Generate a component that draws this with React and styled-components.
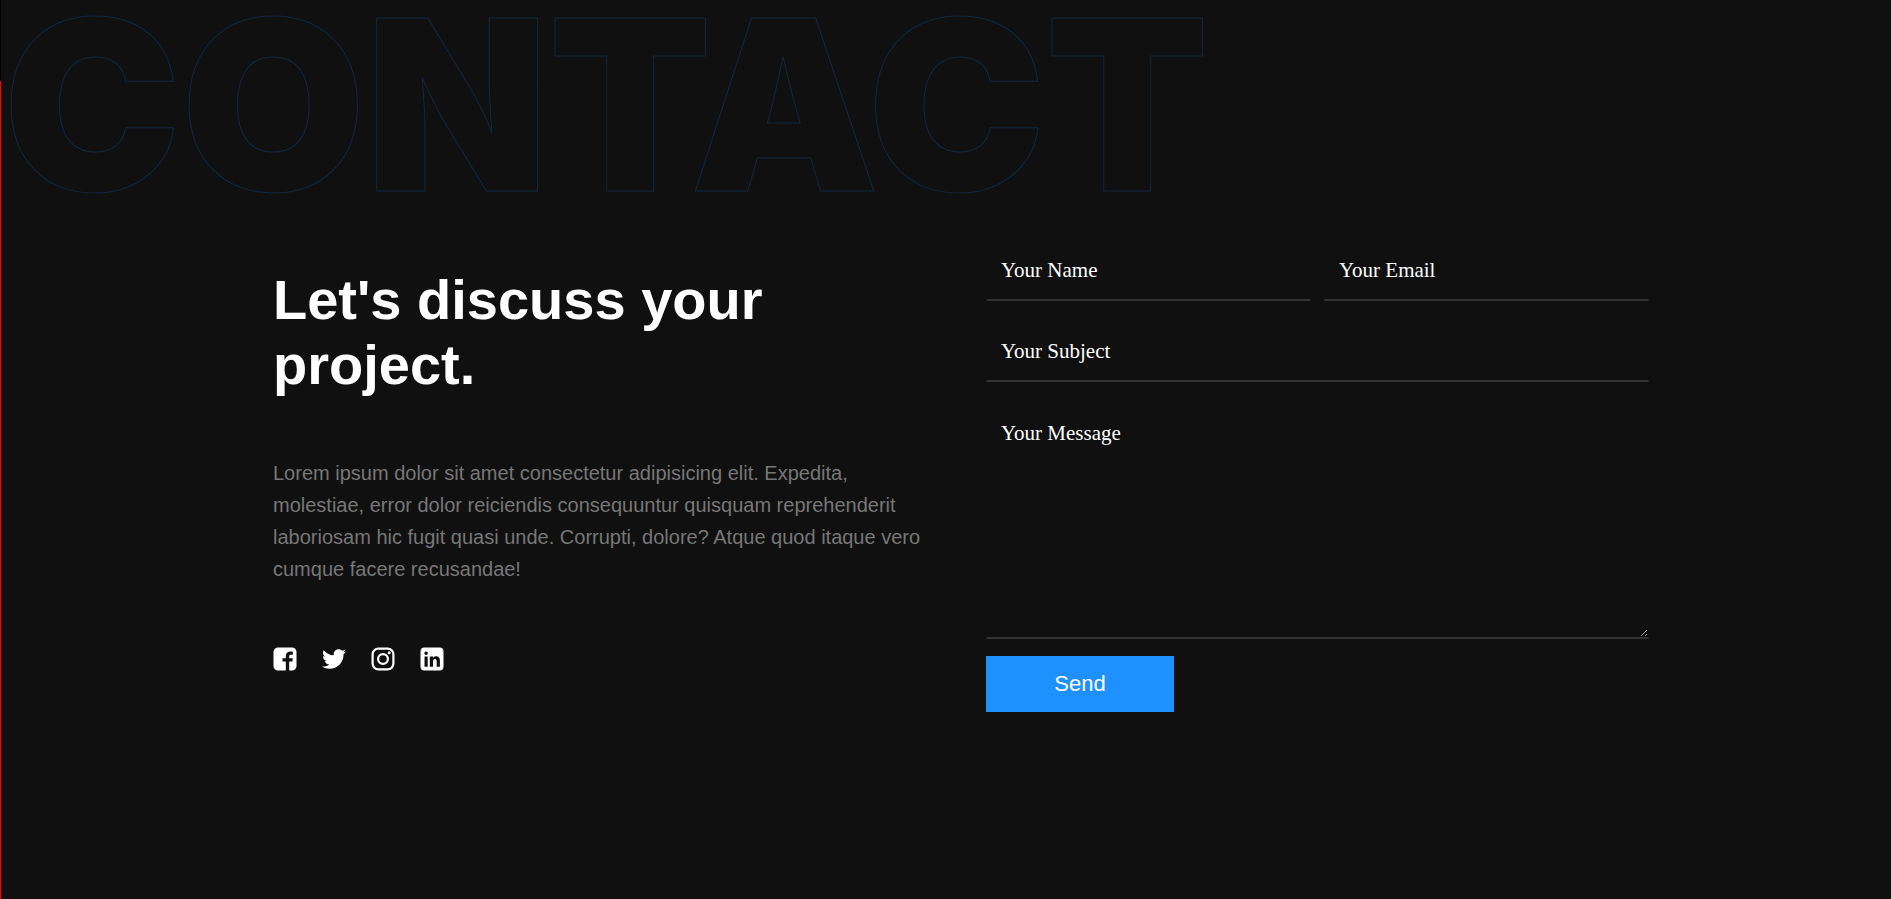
import React from "react";
import styled, { createGlobalStyle } from "styled-components";
import { FaTwitter } from "react-icons/fa";

const GlobalStyle = createGlobalStyle`
  *, *::before, *::after { box-sizing: border-box; }
  body {
    margin: 0;
    background: #101010;
    color: #fff;
    font-family: Arial, "Liberation Sans", sans-serif;
  }
`;

const Shell = styled.div`
  display: grid;
  grid-template-columns: 1px minmax(0, 1fr);
  min-height: 100vh;
`;

const Rail = styled.aside`
  display: flex;
  flex-direction: column;
  background: #f00;
`;

const RailLogo = styled.div`
  height: 81px;
  background: #000;
`;

const Main = styled.main`
  display: flex;
  flex-direction: column;
  gap: 28px;
`;

const Title = styled.h1`
  margin: 0;
  padding-left: 2px;
  font: 900 238px/209px Inter, sans-serif;
  font-optical-sizing: none;
  color: transparent;
  -webkit-text-stroke: 1px #122840;
  user-select: none;
`;

const Content = styled.section`
  display: grid;
  grid-template-columns: 272fr 663fr 50fr 663fr 242fr;
`;

const Intro = styled.div`
  grid-column: 2;
  display: flex;
  flex-direction: column;
  gap: 60px;
  padding-top: 30px;
`;

const Heading = styled.h2`
  margin: 0;
  font-size: 56px;
  line-height: 65px;
  font-weight: 700;
`;

const Text = styled.p`
  margin: 0;
  font-size: 20px;
  line-height: 32px;
  color: #777;
`;

const Socials = styled.nav`
  display: flex;
  gap: 25px;
`;

const SocialLink = styled.a`
  display: flex;
  align-items: center;
  width: 24px;
  height: 28px;
  color: #fff;

  svg { width: 24px; height: 24px; }
`;

const Form = styled.form`
  grid-column: 4;
  display: grid;
  grid-template-columns: 1fr 1fr;
  gap: 17px 13px;
  align-content: start;
`;

const Field = styled.input`
  grid-column: ${(p) => (p.$wide ? "1 / -1" : "auto")};
  width: 100%;
  min-width: 0;
  height: ${(p) => (p.$tall ? 240 : 64)}px;
  padding: ${(p) => (p.$tall ? "20px 14px" : "16px 14px 14px")};
  border: solid transparent;
  border-width: 2px 1px;
  border-bottom-color: #333;
  background: transparent;
  color: #fff;
  font: 21px/24px "Times New Roman", "Liberation Serif", serif;
  outline: none;
  display: block;

  &::placeholder { color: #fff; opacity: 1; }
  &:focus { border-bottom-color: dodgerblue; }
`;

const SendButton = styled.button`
  width: 188px;
  height: 56px;
  border: 0;
  background: dodgerblue;
  color: #fff;
  font: 22px/26px Arial, "Liberation Sans", sans-serif;
  cursor: pointer;
`;

const FacebookIcon = () => (
  <svg viewBox="0 0 24 24" fill="currentColor" aria-hidden="true">
    <path d="M5 .5h14A4.500 4.500 0 0 1 23.500 5v14a4.500 4.500 0 0 1-4.500 4.500h-2.800v-8.900h3.200l.4-3.300h-3.600V9.400c0-1.200.5-1.700 1.700-1.700h1.900V4.700c-.7-.1-1.500-.2-2.400-.2-2.900 0-4.600 1.600-4.600 4.500v2.300H9.500v3.300h3.300v8.900H5A4.500 4.500 0 0 1 .5 19V5A4.500 4.500 0 0 1 5 .5Z" />
  </svg>
);

const InstagramIcon = () => (
  <svg viewBox="0 0 24 24" fill="none" stroke="currentColor" strokeWidth="2.200" aria-hidden="true">
    <rect x="1.600" y="1.600" width="20.800" height="20.800" rx="5.800" />
    <circle cx="12" cy="12" r="4.900" />
    <circle cx="18.200" cy="5.800" r="1.500" fill="currentColor" stroke="none" />
  </svg>
);

const LinkedinIcon = () => (
  <svg viewBox="0 0 24 24" fill="currentColor" aria-hidden="true">
    <path
      fillRule="evenodd"
      d="M4.500.5h15a4 4 0 0 1 4 4v15a4 4 0 0 1-4 4h-15a4 4 0 0 1-4-4v-15a4 4 0 0 1 4-4ZM6.100 4.500a1.800 1.800 0 1 0 0 3.600 1.800 1.800 0 0 0 0-3.600ZM4.500 9.500v10.300h3.200V9.500H4.500Zm5.300 0v10.300H13v-5.300c0-1.500.5-2.500 1.900-2.500s1.800 1 1.800 2.500v5.300h3.200v-6c0-3-1.200-4.600-3.700-4.600-1.500 0-2.600.7-3.200 1.700V9.500H9.800Z"
    />
  </svg>
);

const socials = [
  { label: "Facebook", Icon: FacebookIcon },
  { label: "Twitter", Icon: FaTwitter },
  { label: "Instagram", Icon: InstagramIcon },
  { label: "LinkedIn", Icon: LinkedinIcon },
];

export default function App() {
  return (
    <Shell>
      <GlobalStyle />
      <Rail>
        <RailLogo />
      </Rail>
      <Main>
        <Title>CONTACT</Title>
        <Content>
          <Intro>
            <Heading>Let's discuss your project.</Heading>
            <Text>
              Lorem ipsum dolor sit amet consectetur adipisicing elit. Expedita,
              molestiae, error dolor reiciendis consequuntur quisquam
              reprehenderit laboriosam hic fugit quasi unde. Corrupti, dolore?
              Atque quod itaque vero cumque facere recusandae!
            </Text>
            <Socials aria-label="Social links">
              {socials.map(({ label, Icon }) => (
                <SocialLink key={label} href="#" aria-label={label}>
                  <Icon />
                </SocialLink>
              ))}
            </Socials>
          </Intro>
          <Form onSubmit={(e) => e.preventDefault()}>
            <Field type="text" placeholder="Your Name" aria-label="Your Name" />
            <Field type="email" placeholder="Your Email" aria-label="Your Email" />
            <Field $wide type="text" placeholder="Your Subject" aria-label="Your Subject" />
            <Field as="textarea" $wide $tall placeholder="Your Message" aria-label="Your Message" />
            <SendButton type="submit">Send</SendButton>
          </Form>
        </Content>
      </Main>
    </Shell>
  );
}
